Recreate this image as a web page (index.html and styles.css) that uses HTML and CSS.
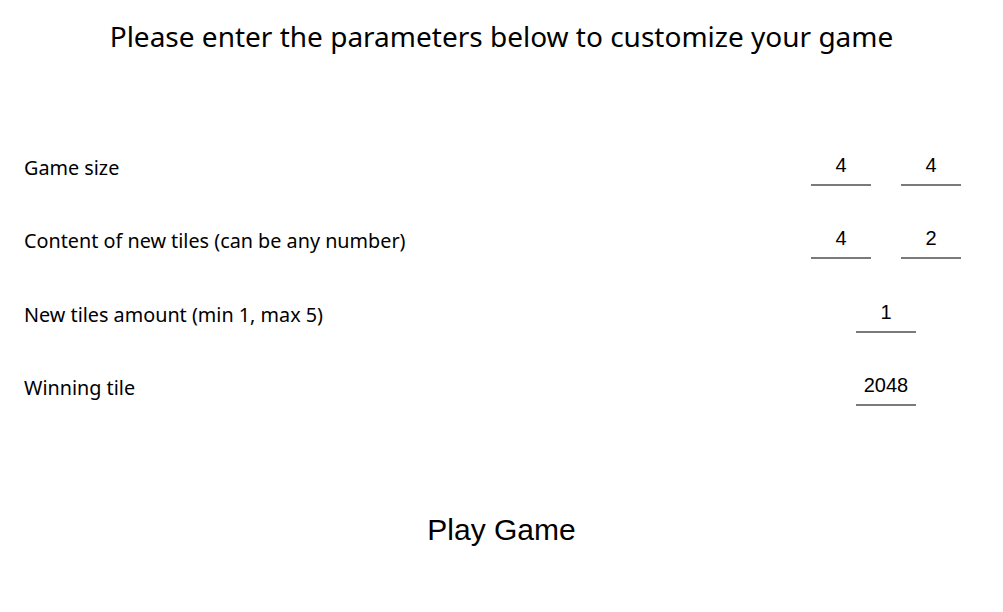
FILE: index.html
```html
<!DOCTYPE html>
<html>
<head>
<meta charset="utf-8">
<link rel="stylesheet" href="styles.css">
</head>
<body>
<div class="page">
  <h1 class="title">Please enter the parameters below to customize your game</h1>
  <div class="form">
    <div class="row">
      <span class="label">Game size</span>
      <div class="inputs">
        <input class="field" value="4">
        <input class="field" value="4">
      </div>
    </div>
    <div class="row">
      <span class="label">Content of new tiles (can be any number)</span>
      <div class="inputs">
        <input class="field" value="4">
        <input class="field" value="2">
      </div>
    </div>
    <div class="row">
      <span class="label">New tiles amount (min 1, max 5)</span>
      <div class="inputs">
        <input class="field" value="1">
      </div>
    </div>
    <div class="row">
      <span class="label">Winning tile</span>
      <div class="inputs">
        <input class="field" value="2048">
      </div>
    </div>
  </div>
  <div class="actions">
    <button class="play">Play Game</button>
  </div>
</div>
</body>
</html>
```
FILE: styles.css
```css
html, body {
  margin: 0;
  padding: 0;
  background: #fff;
}
.page {
  display: flex;
  flex-direction: column;
  width: 1003px;
}
.title {
  margin: 19px 0 0 0;
  font-family: "Noto Sans", "Open Sans", sans-serif;
  font-weight: 400;
  font-size: 28px;
  line-height: 34px;
  text-align: center;
  color: #000;
}
.form {
  display: flex;
  flex-direction: column;
  margin-top: 80px;
  padding: 0 42px 0 24px;
}
.row {
  display: flex;
  align-items: center;
  justify-content: space-between;
  height: 73.5px;
}
.label {
  font-family: "Noto Sans", "Open Sans", sans-serif;
  font-size: 19.8px;
  line-height: 26px;
  padding-bottom: 4px;
  color: #000;
}
.inputs {
  display: flex;
  justify-content: center;
  gap: 30px;
  width: 150px;
}
.field {
  width: 60px;
  height: 32px;
  box-sizing: border-box;
  border: none;
  border-bottom: 2px solid #7a7a7a;
  padding: 0 0 7px 0;
  margin-top: 0;
  font-family: "Liberation Sans", Arial, sans-serif;
  font-size: 20px;
  text-align: center;
  color: #000;
  background: transparent;
  outline: none;
}
.actions {
  display: flex;
  justify-content: center;
  margin-top: 86px;
}
.play {
  border: none;
  background: transparent;
  padding: 0;
  font-family: "Liberation Sans", Arial, sans-serif;
  font-size: 30px;
  line-height: 34px;
  color: #000;
  cursor: pointer;
}
```
